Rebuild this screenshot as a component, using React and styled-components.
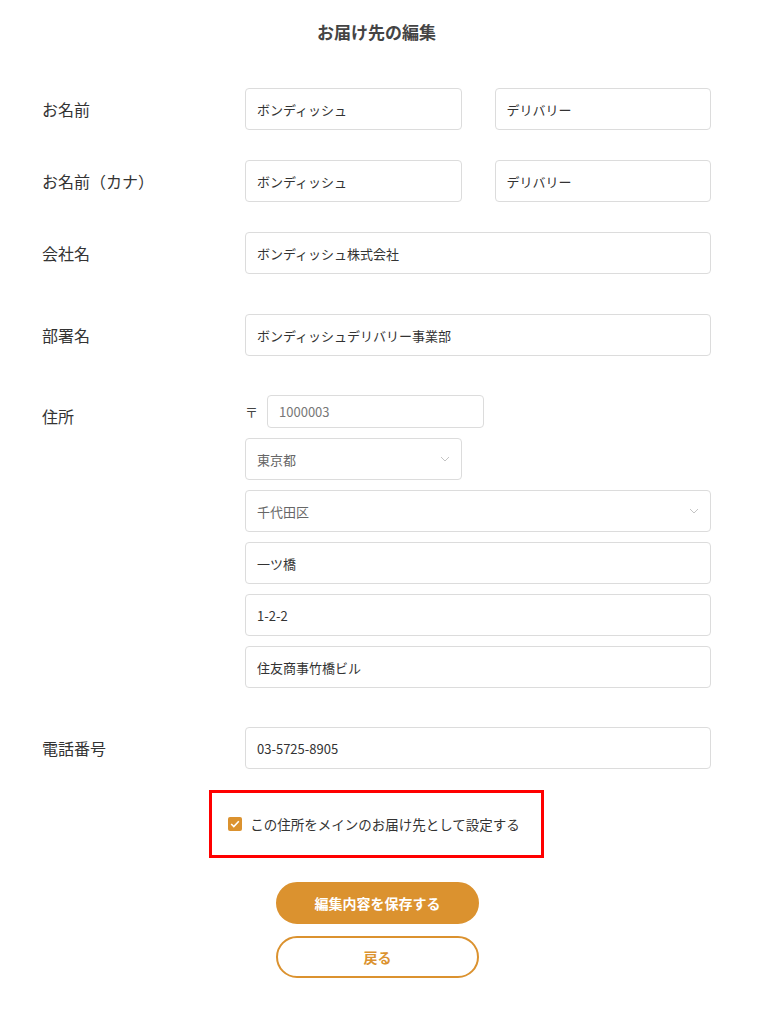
import React from 'react';
import styled, { createGlobalStyle } from 'styled-components';

const GlobalStyle = createGlobalStyle`
  body {
    margin: 0;
    background: #fff;
    font-family: "Noto Sans CJK JP", "Noto Sans", sans-serif;
    color: #333;
  }
`;

const ORANGE = '#db922f';

const Page = styled.div`
  width: 774px;
  padding: 22px 63px 40px 42px;
  box-sizing: border-box;
`;

const Title = styled.h1`
  margin: 0 0 46px;
  font-size: 17px;
  line-height: 20px;
  font-weight: 700;
  color: #444;
  text-align: center;
`;

const Row = styled.div`
  display: grid;
  grid-template-columns: 203px 1fr;
  align-items: start;
  margin-bottom: ${(p) => p.$gap}px;
`;

const Label = styled.div`
  font-size: 16px;
  line-height: 42px;
  color: #333;
`;

const Pair = styled.div`
  display: grid;
  grid-template-columns: 1fr 1fr;
  gap: 33px;
`;

const Stack = styled.div`
  display: flex;
  flex-direction: column;
  gap: 10px;
`;

const Field = styled.input`
  display: block;
  box-sizing: border-box;
  width: ${(p) => p.$width || '100%'};
  height: ${(p) => p.$height || 42}px;
  padding: 0 11px;
  border: 1px solid #dcdcdc;
  border-radius: 4px;
  background: #fff;
  font-family: inherit;
  font-size: 13px;
  color: ${(p) => (p.$muted ? '#777' : '#333')};
  outline: none;
`;

const PostalRow = styled.div`
  display: flex;
  align-items: center;
  gap: 9px;
  font-size: 13px;
  color: #444;
`;

const SelectBox = styled.div`
  box-sizing: border-box;
  width: ${(p) => p.$width || '100%'};
  height: 42px;
  padding: 0 11px;
  display: flex;
  align-items: center;
  justify-content: space-between;
  border: 1px solid #dcdcdc;
  border-radius: 4px;
  font-size: 13px;
  color: #666;
`;

const Chevron = () => (
  <svg width="10" height="6" viewBox="0 0 10 6" fill="none">
    <path d="M1 1l4 4 4-4" stroke="#c4c4c4" strokeWidth="1" />
  </svg>
);

const Select = ({ value, width }) => (
  <SelectBox $width={width}>
    <span>{value}</span>
    <Chevron />
  </SelectBox>
);

const Highlight = styled.div`
  width: 335px;
  height: 68px;
  box-sizing: border-box;
  margin: 21px auto 24px;
  border: 3px solid #ff0000;
  display: flex;
  align-items: center;
  justify-content: center;
  padding-right: 5px;
`;

const CheckLabel = styled.label`
  display: flex;
  align-items: center;
  gap: 8px;
  font-size: 13.5px;
  color: #333;
`;

const CheckBox = styled.span`
  width: 14px;
  height: 14px;
  border-radius: 2px;
  background: ${ORANGE};
  display: inline-flex;
  align-items: center;
  justify-content: center;
`;

const Buttons = styled.div`
  display: flex;
  flex-direction: column;
  align-items: center;
  gap: 12px;
  padding-left: 2px;
`;

const Button = styled.button`
  width: 203px;
  height: 42px;
  box-sizing: border-box;
  border-radius: 21px;
  border: 2px solid ${ORANGE};
  background: ${(p) => (p.$primary ? ORANGE : '#fff')};
  color: ${(p) => (p.$primary ? '#fff' : ORANGE)};
  font-family: inherit;
  font-size: 14px;
  font-weight: 700;
  cursor: pointer;
`;

export default function App() {
  return (
    <>
      <GlobalStyle />
      <Page>
        <Title>お届け先の編集</Title>

        <Row $gap={30}>
          <Label>お名前</Label>
          <Pair>
            <Field readOnly value="ボンディッシュ" />
            <Field readOnly value="デリバリー" />
          </Pair>
        </Row>

        <Row $gap={30}>
          <Label>お名前（カナ）</Label>
          <Pair>
            <Field readOnly value="ボンディッシュ" />
            <Field readOnly value="デリバリー" />
          </Pair>
        </Row>

        <Row $gap={40}>
          <Label>会社名</Label>
          <Field readOnly value="ボンディッシュ株式会社" />
        </Row>

        <Row $gap={39}>
          <Label>部署名</Label>
          <Field readOnly value="ボンディッシュデリバリー事業部" />
        </Row>

        <Row $gap={39}>
          <Label>住所</Label>
          <Stack>
            <PostalRow>
              <span>〒</span>
              <Field readOnly value="1000003" $muted $width="217px" $height={33} />
            </PostalRow>
            <Select value="東京都" width="217px" />
            <Select value="千代田区" />
            <Field readOnly value="一ツ橋" />
            <Field readOnly value="1-2-2" />
            <Field readOnly value="住友商事竹橋ビル" />
          </Stack>
        </Row>

        <Row $gap={0}>
          <Label>電話番号</Label>
          <Field readOnly value="03-5725-8905" />
        </Row>

        <Highlight>
          <CheckLabel>
            <CheckBox>
              <svg width="10" height="8" viewBox="0 0 10 8" fill="none">
                <path d="M1.2 4l2.6 2.5L8.8 1.3" stroke="#fff" strokeWidth="1.6" />
              </svg>
            </CheckBox>
            この住所をメインのお届け先として設定する
          </CheckLabel>
        </Highlight>

        <Buttons>
          <Button $primary>編集内容を保存する</Button>
          <Button>戻る</Button>
        </Buttons>
      </Page>
    </>
  );
}
